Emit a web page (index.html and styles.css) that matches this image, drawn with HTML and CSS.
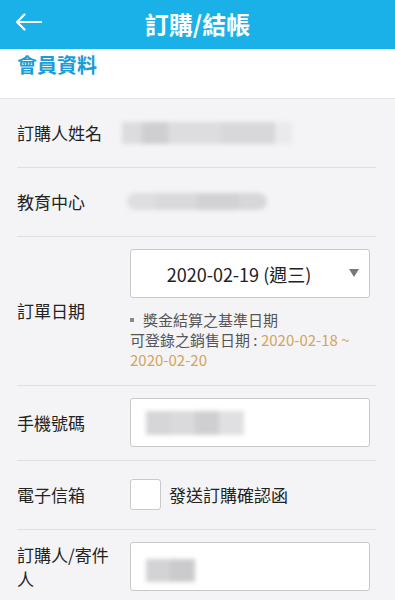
FILE: index.html
```html
<!DOCTYPE html>
<html lang="zh-Hant">
<head>
  <meta charset="UTF-8" />
  <meta name="viewport" content="width=device-width, initial-scale=1.0" />
  <title>訂購/結帳</title>
  <link rel="stylesheet" href="styles.css">
</head>
<body>
  <header class="topbar">
    <span class="back">
      <svg width="27" height="18" viewBox="0 0 27 18">
        <path d="M26 9H2M9.5 1.5L2 9l7.5 7.5" fill="none" stroke="#fff" stroke-width="2.2" stroke-linecap="round" stroke-linejoin="round"/>
      </svg>
    </span>
    <h1>訂購/結帳</h1>
  </header>

  <div class="section-title">會員資料</div>

  <div class="form">
    <div class="row">
      <div class="label">訂購人姓名</div>
      <div class="value"><div class="blur blur-name"></div></div>
    </div>

    <div class="row">
      <div class="label">教育中心</div>
      <div class="value"><div class="blur blur-center"></div></div>
    </div>

    <div class="row">
      <div class="label">訂單日期</div>
      <div class="value">
        <div class="select">
          <span>2020-02-19 (週三)</span>
          <span class="caret"></span>
        </div>
        <div class="note">
          <div><span class="dot"></span>獎金結算之基準日期</div>
          <div>可登錄之銷售日期 : <span class="hl">2020-02-18 ~</span><br><span class="hl">2020-02-20</span></div>
        </div>
      </div>
    </div>

    <div class="row">
      <div class="label">手機號碼</div>
      <div class="value">
        <div class="input"><div class="blur blur-phone"></div></div>
      </div>
    </div>

    <div class="row">
      <div class="label">電子信箱</div>
      <div class="value check">
        <span class="box"></span>
        <span>發送訂購確認函</span>
      </div>
    </div>

    <div class="row">
      <div class="label narrow">訂購人/寄件人</div>
      <div class="value">
        <div class="input"><div class="blur blur-sender"></div></div>
      </div>
    </div>
  </div>
</body>
</html>
```

FILE: styles.css
```css
* {
  margin: 0;
  padding: 0;
  box-sizing: border-box;
}

body {
  width: 395px;
  height: 600px;
  overflow: hidden;
  background: #f4f4f6;
  font-family: "Noto Sans CJK TC", "Noto Sans", sans-serif;
  color: #222;
}

.topbar {
  height: 49px;
  background: #19b1e7;
  display: flex;
  align-items: center;
  justify-content: center;
  position: relative;
}

.topbar h1 {
  color: #fff;
  font-size: 24px;
  font-weight: bold;
  margin-top: -3px;
}

.back {
  position: absolute;
  left: 15px;
  top: 12px;
}

.section-title {
  height: 50px;
  background: #fff;
  border-bottom: 1px solid #e2e2e4;
  color: #1a9dd6;
  font-size: 20px;
  line-height: 30px;
  font-weight: bold;
  padding: 1px 0 0 17px;
}

.form {
  padding: 0 19px 0 17px;
}

.row {
  display: flex;
  align-items: center;
  border-bottom: 1px solid #dedee0;
  padding: 12px 0 13px;
  min-height: 69px;
}

.label {
  width: 113px;
  flex-shrink: 0;
  font-size: 17px;
  line-height: 24px;
  color: #222;
}

.label.narrow {
  width: 100px;
  margin-right: 13px;
}

.value {
  flex: 1;
  min-width: 0;
  margin-right: 6px;
}

.blur {
  background: #d4d4d6;
  filter: blur(2px);
}

.blur-name {
  width: 170px;
  height: 22px;
  margin-left: -8px;
  background: linear-gradient(to right, #dcdcde 0 12%, #cfcfd1 12% 27%, #dddddf 27% 58%, #d8d8da 58% 90%, #eaeaec 90%);
}

.blur-center {
  width: 140px;
  height: 17px;
  margin-left: -3px;
  border-radius: 9px;
  background: linear-gradient(to right, #dedee0 0 20%, #d9d9db 20% 50%, #d2d2d4 50% 80%, #d7d7d9 80%);
}

.blur-phone {
  width: 98px;
  height: 24px;
  background: linear-gradient(to right, #d6d6d8 0 25%, #dadadc 25% 50%, #cfcfd1 50% 75%, #e0e0e2 75%);
}

.blur-sender {
  width: 49px;
  height: 23px;
  margin-top: 8px;
  background: linear-gradient(to right, #d3d3d5 0 50%, #cbcbcd 50%);
}

.select,
.input {
  height: 49px;
  background: #fff;
  border: 1px solid #c9c9cc;
  border-radius: 3px;
  display: flex;
  align-items: center;
}

.select {
  justify-content: center;
  position: relative;
  font-size: 18px;
  color: #222;
  padding-right: 22px;
}

.caret {
  position: absolute;
  right: 10px;
  top: 19px;
  border-left: 5px solid transparent;
  border-right: 5px solid transparent;
  border-top: 8px solid #77777f;
}

.input {
  padding-left: 15px;
}

.note {
  margin: 12px 0 2px;
  font-size: 15px;
  line-height: 20px;
  color: #555;
}

.dot {
  display: inline-block;
  width: 4px;
  height: 4px;
  background: #888;
  margin: 0 9px 3px 0;
  vertical-align: middle;
}

.hl {
  color: #d6a35c;
}

.check {
  display: flex;
  align-items: center;
  gap: 8px;
  font-size: 17px;
}

.box {
  width: 31px;
  height: 31px;
  background: #fff;
  border: 1px solid #c9c9cc;
  border-radius: 3px;
}
```
